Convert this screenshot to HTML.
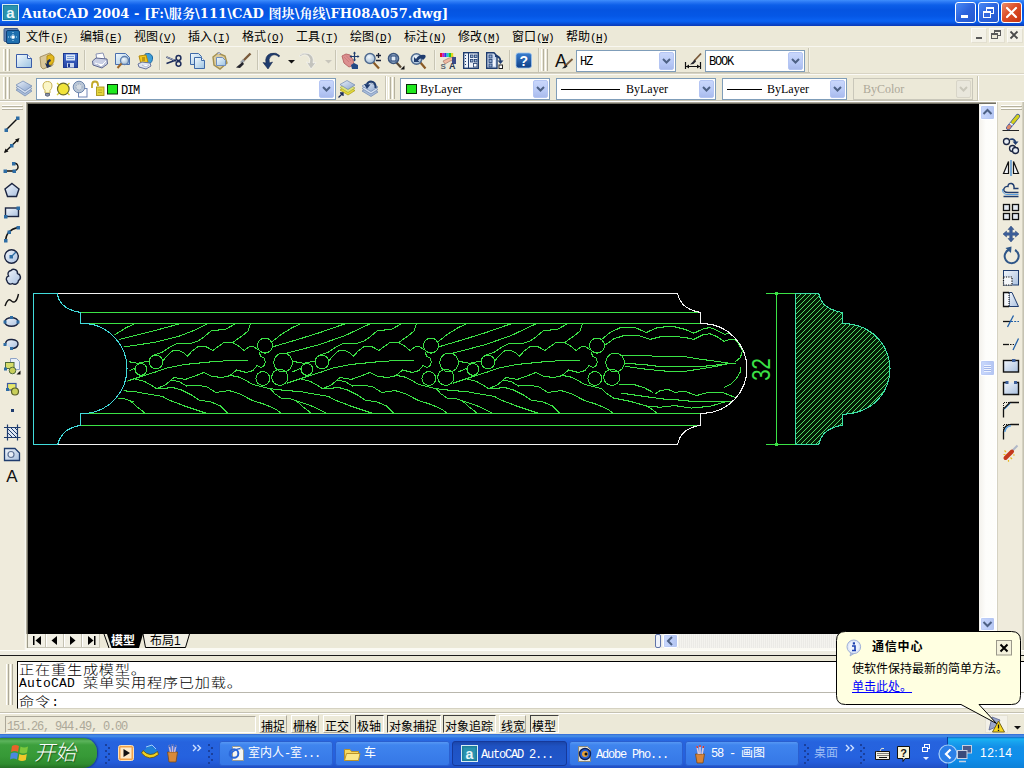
<!DOCTYPE html>
<html lang="zh-CN">
<head>
<meta charset="utf-8">
<title>AutoCAD 2004</title>
<style>
*{box-sizing:border-box}
html,body{margin:0;padding:0}
body{width:1024px;height:768px;position:relative;overflow:hidden;background:#ece9d8;
 font-family:"Liberation Serif","Noto Serif CJK SC",serif;font-size:12px;color:#000;line-height:1}
.abs{position:absolute}
.mono{font-family:"Liberation Mono","Noto Serif CJK SC",monospace}
#title{left:0;top:0;width:1024px;height:26px;
 background:linear-gradient(to bottom,#3f8efd 0,#2a78f4 2px,#0d5fe9 5px,#0554e1 10px,#0557e6 16px,#0b63f3 21px,#0855df 23px,#0a41c2 25px,#0a3bb8 26px)}
#title .txt{left:22px;top:3px;color:#fff;font:bold 13px "DejaVu Serif","Liberation Serif","Noto Serif CJK SC",serif;white-space:pre;letter-spacing:0.07px}
.wbtn{top:4px;width:19px;height:19px;border:1px solid #fff;border-radius:3px;
 background:linear-gradient(135deg,#4a8af5 0,#2c63dd 50%,#2458cf 100%)}
#menu{left:0;top:26px;width:1024px;height:20px;background:#ece9d8}
#menu span{position:absolute;top:5px;white-space:pre;font-size:12px;font-family:"Liberation Sans","Noto Sans CJK SC",sans-serif}
.tbline{left:0;width:1024px;height:1px}
.combo{background:#fff;border:1px solid #7f9db9;height:22px}
.combo .dd{position:absolute;right:1px;top:1px;width:15px;height:18px;overflow:hidden;border-radius:2px;
 background:linear-gradient(to bottom,#c9d7fb 0,#b8c9f6 60%,#a9bbed 100%);border:1px solid #b4c5f3}
.combo .t{position:absolute;top:5px;font:12px "Liberation Mono","Noto Serif CJK SC",monospace;letter-spacing:-1.2px;white-space:pre}
.combo .t.ser{top:3px;font-family:"Liberation Serif","Noto Serif CJK SC",serif;letter-spacing:0}
.grip{width:3px;border-left:1px solid #fff;border-right:1px solid #aca899;background:#ece9d8}
.sep{width:2px;border-left:1px solid #c5c2b2;border-right:1px solid #fff}
</style>
</head>
<body>
<div id="title" class="abs">
 <svg class="abs" style="left:2px;top:4px" width="17" height="17" viewBox="0 0 17 17">
  <rect x="0.5" y="0.5" width="16" height="16" fill="#1d7f9c" stroke="#d8eef2"/>
  <rect x="2" y="2" width="13" height="13" fill="#2a93ae"/>
  <text x="8.5" y="13.5" text-anchor="middle" font-family="Liberation Sans,sans-serif" font-weight="bold" font-size="15" fill="#e9f6f8">a</text>
 </svg>
 <div class="abs txt" id="ttxt">AutoCAD 2004 - [F:\服务\111\CAD 图块\角线\FH08A057.dwg]</div>
 <div class="abs wbtn" style="left:955px;top:2px;width:21px;height:21px"><div class="abs" style="left:5px;top:12px;width:7px;height:3px;background:#fff"></div></div>
 <div class="abs wbtn" style="left:978px;top:2px;width:21px;height:21px">
  <div class="abs" style="left:7px;top:4px;width:8px;height:7px;border:1px solid #fff;border-top-width:2px"></div>
  <div class="abs" style="left:4px;top:8px;width:8px;height:7px;border:1px solid #fff;border-top-width:2px;background:#3469df"></div>
 </div>
 <div class="abs wbtn" style="left:1001px;top:2px;width:21px;height:21px;background:linear-gradient(135deg,#ec8d6c 0,#dc4e28 45%,#c63310 100%)">
  <svg class="abs" style="left:0;top:0" width="19" height="19"><path d="M5 5 L14 14 M14 5 L5 14" stroke="#fff" stroke-width="2.2" stroke-linecap="round"/></svg>
 </div>
</div>
<div id="menu" class="abs">
 <svg class="abs" style="left:3px;top:2px" width="18" height="17" viewBox="0 0 18 17">
  <rect x="1" y="0.5" width="14" height="13" rx="1" fill="#5c7fb5" stroke="#3a5a8c"/>
  <rect x="3.5" y="2.5" width="13" height="13" rx="1.5" fill="#1f6fae" stroke="#0f3f74"/>
  <path d="M10 4 V14 M5 9 H15" stroke="#bfe6ff" stroke-width="1" stroke-dasharray="1 1"/>
  <rect x="8.5" y="7.5" width="3" height="3" fill="#fff"/>
 </svg>
 <span style="left:26px">文件<span class="mn">(<u>F</u>)</span></span>
 <span style="left:80px">编辑<span class="mn">(<u>E</u>)</span></span>
 <span style="left:134px">视图<span class="mn">(<u>V</u>)</span></span>
 <span style="left:188px">插入<span class="mn">(<u>I</u>)</span></span>
 <span style="left:242px">格式<span class="mn">(<u>O</u>)</span></span>
 <span style="left:296px">工具<span class="mn">(<u>T</u>)</span></span>
 <span style="left:350px">绘图<span class="mn">(<u>D</u>)</span></span>
 <span style="left:404px">标注<span class="mn">(<u>N</u>)</span></span>
 <span style="left:458px">修改<span class="mn">(<u>M</u>)</span></span>
 <span style="left:512px">窗口<span class="mn">(<u>W</u>)</span></span>
 <span style="left:566px">帮助<span class="mn">(<u>H</u>)</span></span>
 <div class="abs mdib" style="left:971px"></div><div class="abs mdib" style="left:989px"></div><div class="abs mdib" style="left:1007px"></div>
 <div class="abs" style="left:976px;width:6px;height:2px;background:#5a5a5a;top:11px"></div>
 <div class="abs" style="left:994px;top:4px;width:7px;height:6px;border:1px solid #5a5a5a;border-top-width:2px"></div>
 <div class="abs" style="left:991px;top:7px;width:7px;height:6px;border:1px solid #5a5a5a;border-top-width:2px;background:#ece9d8"></div>
 <svg class="abs" style="left:1009px;top:4px" width="10" height="10"><path d="M1.5 1.5 L8.5 8.5 M8.5 1.5 L1.5 8.5" stroke="#4a4a4a" stroke-width="1.8"/></svg>
</div>
<style>
#menu .mn{position:static;font-family:"Liberation Mono",monospace;font-size:11px;letter-spacing:-0.6px}
#menu span span{position:static}
.mdib{top:2px;width:16px;height:15px;background:#f3f1e7;border:1px solid #fbfaf5;border-right-color:#e2dfd0;border-bottom-color:#e2dfd0}
</style>
<!-- toolbar row 1 -->
<div class="abs" style="left:0;top:46px;width:1024px;height:1px;background:#f8f7f0"></div>
<div class="abs" style="left:0;top:72px;width:810px;height:1px;background:#c5c2b2"></div>
<div class="abs" style="left:0;top:73px;width:1024px;height:1px;background:#d8d4c4"></div>
<div class="abs" style="left:0;top:74px;width:1024px;height:1px;background:#fbfaf5"></div>
<svg class="abs" style="left:0;top:46px" width="1024" height="28" viewBox="0 46 1024 28">
 <defs>
  <linearGradient id="pg" x1="0" y1="0" x2="1" y2="1"><stop offset="0" stop-color="#f4fafd"/><stop offset="1" stop-color="#9cc3e2"/></linearGradient>
  <linearGradient id="fl" x1="0" y1="0" x2="0" y2="1"><stop offset="0" stop-color="#4a73d1"/><stop offset="1" stop-color="#2443a3"/></linearGradient>
  <radialGradient id="lens" cx="0.4" cy="0.35" r="0.7"><stop offset="0" stop-color="#f2f8fc"/><stop offset="1" stop-color="#9db8d2"/></radialGradient>
  <linearGradient id="hp" x1="0" y1="0" x2="0" y2="1"><stop offset="0" stop-color="#3a7fd0"/><stop offset="1" stop-color="#0f3f86"/></linearGradient>
 </defs>
 <!-- grippers -->
 <g fill="none">
  <path d="M3.5 49 V71 M7.5 49 V71" stroke="#fff"/><path d="M5.5 49 V71 M9.5 49 V71" stroke="#b5b19f"/>
  <path d="M541.5 49 V71 M545.5 49 V71" stroke="#fff"/><path d="M543.5 49 V71 M547.5 49 V71" stroke="#b5b19f"/>
 </g>
 <!-- separators -->
 <g stroke="#c8c5b4"><path d="M84.5 50 V70 M159.5 50 V70 M257.5 50 V70 M335.5 50 V70 M434.5 50 V70 M509.5 50 V70 M538.5 48 V72 M808.5 48 V72"/></g>
 <g stroke="#f4f2e8"><path d="M85.5 50 V70 M160.5 50 V70 M258.5 50 V70 M336.5 50 V70 M435.5 50 V70 M510.5 50 V70 M539.5 48 V72 M809.5 48 V72"/></g>
 <!-- New -->
 <g transform="translate(16,53)"><path d="M0.5 1.5 H11.5 L15.5 5.5 V14.5 H0.5 Z" fill="url(#pg)" stroke="#3a5ca8"/><path d="M11.5 1.5 V5.5 H15.5" fill="#fff" stroke="#3a5ca8"/></g>
 <!-- Open -->
 <g transform="translate(39,52)"><path d="M1 5 L11 1 L13 3 L14 13 L4 17 L2 15 Z" fill="#d9c79a" stroke="#a89466"/><path d="M8 4 Q13 1 15 5 Q16 10 12 13 L8 12 Z" fill="#e3b81e" stroke="#b28e12"/><path d="M11 7 Q7 8 8 12 L6 11 L8 16 L13 14 L10 13 Q9 10 12 9 Z" fill="#1f2f55"/></g>
 <!-- Save -->
 <g transform="translate(63,53)"><rect x="0.5" y="0.5" width="14" height="14" fill="url(#fl)" stroke="#1c3891"/><rect x="3" y="1.5" width="9" height="6" fill="#dbe7f7"/><path d="M4 3.5 H11 M4 5.5 H11" stroke="#7f9fd6"/><rect x="4" y="10" width="7" height="4.5" fill="#c9d6ee"/><rect x="5" y="10.5" width="2" height="3.5" fill="#1c3891"/></g>
 <!-- Print -->
 <g transform="translate(92,53)"><path d="M4 1 L11 0 L13 6 L5 8 Z" fill="#fdfdfd" stroke="#8a93b5"/><path d="M0.5 8 L4 5 L15 6 L15.5 11 L10 15 L1 12 Z" fill="#c9cfe4" stroke="#5d678f"/><path d="M3 10 L10 12 L14 8" fill="none" stroke="#fff"/><path d="M5 11 L9 14 L13 11" fill="#fff" stroke="#8a93b5" stroke-width="0.6"/></g>
 <!-- Preview -->
 <g transform="translate(114,52)"><path d="M1.5 1.5 H11.5 L15.5 5.5 V12.5 H1.5 Z" fill="url(#pg)" stroke="#4a6fae"/><circle cx="10.5" cy="8.5" r="4" fill="url(#lens)" stroke="#5f7fae" stroke-width="1.3"/><path d="M7.5 11.5 L3.5 16" stroke="#a0692a" stroke-width="2"/></g>
 <!-- Publish -->
 <g transform="translate(137,52)"><path d="M8 2 Q14 0 15.5 5 Q16 10 12 12 L8 8 Z" fill="#3f9fd8" stroke="#1d6aa5"/><path d="M2 4 L9 3 L11 10 L4 12 Z" fill="#f4c81f" stroke="#b48b0c"/><path d="M5 6 H8 M5 8 H8" stroke="#8a6a08"/><path d="M1 12 L5 10 L13 11 L14 14 L9 17 L2 15 Z" fill="#dfe5f2" stroke="#69749b"/><path d="M5 13 L9 15 L12 13" fill="#fff" stroke="#8a93b5" stroke-width="0.6"/></g>
 <!-- Cut -->
 <g transform="translate(166,54)" fill="none" stroke="#1d2d5b"><path d="M0.5 3 L10 7 M0.5 9.5 L10 6" stroke-width="1.6"/><path d="M1 3.2 L8 6" stroke="#c9d1e4" stroke-width="0.8"/><circle cx="12.5" cy="4" r="2.4" stroke-width="1.5"/><circle cx="12.5" cy="9.8" r="2.4" stroke-width="1.5"/></g>
 <!-- Copy -->
 <g transform="translate(189,52)"><path d="M1.5 1.5 H9.5 L12.5 4.5 V12.5 H1.5 Z" fill="url(#pg)" stroke="#3f6aa8"/><path d="M5.5 5.5 H12.5 L15.5 8.5 V16.5 H5.5 Z" fill="url(#pg)" stroke="#3f6aa8"/><path d="M12.5 5.5 V8.5 H15.5" fill="#fff" stroke="#3f6aa8"/></g>
 <!-- Paste -->
 <g transform="translate(212,51)"><path d="M1 6 L6 2 L13 5 L15 12 L8 18 L2 14 Z" fill="#dccc9d" stroke="#a4904f" stroke-width="1.4"/><path d="M5 3 Q7 0 9 3" fill="#e6e9f2" stroke="#7b86a8"/><path d="M4.500 6.500 H10.500 L13.500 9.500 V14.500 H4.500 Z" fill="url(#pg)" stroke="#6f8fbf"/></g>
 <!-- Match prop -->
 <g transform="translate(236,52)"><path d="M14.500 1.500 L7 9" stroke="#7a5a3a" stroke-width="2.400"/><path d="M8 8 L5 11" stroke="#9aa0a8" stroke-width="2.600"/><path d="M6.500 10 L0 15.500 L4 16 L8 12 Z" fill="#23242c"/></g>
 <!-- Undo -->
 <g transform="translate(263,52)"><path d="M16 5 Q12 1 8 4 Q5 7 6.500 11 L9.500 10 L5 17 L0 10.500 L3 11 Q1.500 4 7.500 1.500 Q13 0 16.500 3.500 Z" fill="#1f3c6e" stroke="#16294f" stroke-width="0.600"/></g>
 <path d="M288 60 H295 L291.500 63.500 Z" fill="#111"/>
 <!-- Redo (disabled) -->
 <g transform="translate(299,52)"><path d="M1 5 Q5 1 9 4 Q12 7 10.500 11 L7.500 10 L12 17 L17 10.500 L14 11 Q15.500 4 9.500 1.500 Q4 0 0.500 3.500 Z" fill="#c3c3bd" stroke="#fff" stroke-width="0.500"/></g>
 <path d="M325 60 H332 L328.500 63.500 Z" fill="#c8c6bc"/>
 <!-- Pan -->
 <g transform="translate(341,52)"><path d="M1 4 L5 2 L9 3 L12 8 L13 13 L8 15 L3 11 Z" fill="#dc8f8f" stroke="#b96a6a"/><path d="M3 5 L8 10 M5 3.500 L10 9" stroke="#c57676" stroke-width="0.700"/><path d="M10 13 L13 11 L17 13 L17 17 L11 17 Z" fill="#224a85"/><path d="M13.500 0.500 V8.500 M9.500 4.500 H17.500" stroke="#1f3c6e" stroke-width="1.200"/><path d="M13.500 -0.500 L15 1.500 H12 Z M13.500 9.500 L15 7.500 H12 Z M8.500 4.500 L10.500 3 V6 Z M18.500 4.500 L16.500 3 V6 Z" fill="#1f3c6e"/></g>
 <!-- Zoom realtime -->
 <g transform="translate(364,52)"><path d="M9 10 L15 16.500" stroke="#8a5a25" stroke-width="2.200"/><circle cx="6" cy="6.500" r="5" fill="url(#lens)" stroke="#4f6a8f" stroke-width="1.500"/><path d="M12 3.500 H17 M14.500 1 V6 M12 8.500 H17" stroke="#1a2238" stroke-width="1.300"/></g>
 <!-- Zoom window -->
 <g transform="translate(387,52)"><path d="M9 10 L14 15.500" stroke="#5a4a35" stroke-width="2.200"/><circle cx="6.500" cy="6.500" r="5" fill="#9db4cf" stroke="#3b557c" stroke-width="1.600"/><rect x="4" y="4" width="5" height="5" fill="#dfeaf5" stroke="#1f3c6e"/><path d="M17.500 13.500 V17.500 H13.500 Z" fill="#111"/></g>
 <!-- Zoom previous -->
 <g transform="translate(410,52)"><path d="M10 10 L15.500 16.500" stroke="#8a5a25" stroke-width="2.200"/><circle cx="6.500" cy="7" r="5.200" fill="url(#lens)" stroke="#4f6a8f" stroke-width="1.500"/><path d="M4 10 V5 L6 7 Q9 2 15 3 Q17 5 13 8 Q11 5 8 8.500 L9.500 10 Z" fill="#1f3c6e"/></g>
 <!-- Properties -->
 <g transform="translate(440,52)"><rect x="0" y="1" width="2.200" height="4" fill="#e0142a"/><rect x="2.200" y="1" width="2.200" height="4" fill="#c418c9"/><rect x="4.400" y="1" width="2.200" height="4" fill="#2438e4"/><rect x="6.600" y="1" width="2.200" height="4" fill="#19c7d6"/><rect x="8.800" y="1" width="2.200" height="4" fill="#1fc42a"/><rect x="11" y="1" width="2.200" height="4" fill="#e2d41c"/><path d="M3 9 L9 6 L14 5 L15 8 L10 9 L5 12 Z" fill="#f0b9a2" stroke="#9a6a5a" stroke-width="0.600"/><path d="M12 5 H16 V12 H12 Z" fill="#3a4a8a"/><text x="0.500" y="16.500" font-family="Liberation Sans,sans-serif" font-size="8" font-weight="bold" fill="#5a6670">S</text><text x="9" y="17" font-family="Liberation Sans,sans-serif" font-size="9" font-weight="bold" fill="#2a3550">A</text></g>
 <!-- DesignCenter -->
 <g transform="translate(463,52)"><rect x="0.700" y="0.700" width="14.600" height="15.600" fill="#eef3fa" stroke="#1f3c6e" stroke-width="1.400"/><path d="M5.500 1 V16" stroke="#1f3c6e"/><path d="M2 3.500 H4 M2 6.500 H4 M2 9.500 H4 M2 12.500 H4" stroke="#1f3c6e" stroke-dasharray="1 1"/><g fill="#9fb6d6" stroke="#1f3c6e" stroke-width="0.800"><rect x="7.500" y="3" width="2.500" height="2.500"/><rect x="11.500" y="3" width="2.500" height="2.500"/><rect x="7.500" y="7.500" width="2.500" height="2.500"/><rect x="11.500" y="7.500" width="2.500" height="2.500"/><rect x="10.500" y="11.500" width="3.500" height="3.500" fill="#fff"/></g></g>
 <!-- Tool palettes -->
 <g transform="translate(486,52)"><path d="M0.700 0.700 H8 L11 4 V16.300 H0.700 Z" fill="#cfdcf0" stroke="#1f3c6e" stroke-width="1.400"/><g fill="#8fa9d0" stroke="#1f3c6e" stroke-width="0.800"><rect x="3" y="3" width="3" height="3"/><rect x="3" y="7.500" width="3" height="3"/><rect x="3" y="12" width="3" height="3"/></g><path d="M8 8 V14" stroke="#fff" stroke-width="1.500"/><path d="M9 4 Q14 4 14.500 9" fill="none" stroke="#1f3c6e" stroke-width="1.800"/><path d="M11.500 8.500 H17.500 L14.500 12 Z" fill="#1f3c6e"/><rect x="13" y="13" width="3.500" height="3.500" fill="#fff" stroke="#222"/></g>
 <!-- Help -->
 <g transform="translate(516,53)"><rect x="0" y="0" width="15.500" height="15" rx="2.500" fill="url(#hp)" stroke="#9cc3ee" stroke-width="0.800"/><text x="7.800" y="12.800" text-anchor="middle" font-family="Liberation Sans,sans-serif" font-size="14" font-weight="bold" fill="#fff">?</text></g>
 <!-- Text style icon -->
 <g transform="translate(555,52)"><text x="0" y="15" font-family="Liberation Sans,sans-serif" font-size="18" fill="#111">A</text><path d="M17.500 7 L10 14" stroke="#7a5a3a" stroke-width="1.800"/><path d="M11 12.500 L7 16.500 L10.500 16 L12.500 14 Z" fill="#23242c"/></g>
 <!-- Dim style icon -->
 <g transform="translate(685,52)"><path d="M16 1.500 L9 9" stroke="#7a5a3a" stroke-width="1.800"/><path d="M10 7.500 L5 12.500 L8.500 12 L11 9.500 Z" fill="#23242c"/><path d="M0.500 10 V17 M15.500 10 V17 M1 14.500 H15" stroke="#111" stroke-width="1.200"/><path d="M1 14.500 L4 12.500 V16.500 Z M15 14.500 L12 12.500 V16.500 Z" fill="#111"/></g>
</svg>
<div class="abs combo" style="left:576px;top:50px;width:100px"><span class="t" style="left:3px;top:4px">HZ</span><div class="dd"><svg width="13" height="16"><path d="M3 6 L6.500 9.500 L10 6" fill="none" stroke="#4d6185" stroke-width="2"/></svg></div></div>
<div class="abs combo" style="left:705px;top:50px;width:100px"><span class="t" style="left:3px;top:4px">BOOK</span><div class="dd"><svg width="13" height="16"><path d="M3 6 L6.500 9.500 L10 6" fill="none" stroke="#4d6185" stroke-width="2"/></svg></div></div>
<!-- toolbar row 2 -->
<div class="abs" style="left:0;top:100px;width:978px;height:1px;background:#c5c2b2"></div>
<div class="abs" style="left:0;top:101px;width:1024px;height:1px;background:#fff"></div>
<svg class="abs" style="left:0;top:74px" width="1024" height="28" viewBox="0 74 1024 28">
 <defs>
  <linearGradient id="ly" x1="0" y1="0" x2="1" y2="1"><stop offset="0" stop-color="#eaf1f9"/><stop offset="1" stop-color="#8aa4cc"/></linearGradient>
 </defs>
 <g fill="none">
  <path d="M3.500 77 V99 M7.500 77 V99" stroke="#fff"/><path d="M5.500 77 V99 M9.500 77 V99" stroke="#b5b19f"/>
  <path d="M388.500 77 V99 M392.500 77 V99" stroke="#fff"/><path d="M390.500 77 V99 M394.500 77 V99" stroke="#b5b19f"/>
 </g>
 <g stroke="#c8c5b4"><path d="M385.500 76 V100 M977.500 76 V100"/></g>
 <g stroke="#fff"><path d="M386.500 76 V100 M978.500 76 V100"/></g>
 <!-- Layers icon -->
 <g transform="translate(16,81)"><path d="M0 9 L7 5 L16 10 L9 15 Z" fill="#a9bddb" stroke="#7088b0" stroke-width="0.700"/><path d="M0 6.500 L7 2.500 L16 7.500 L9 12.500 Z" fill="#d6e1f1" stroke="#7088b0" stroke-width="0.700"/><path d="M0 4 L7 0 L16 5 L9 10 Z" fill="url(#ly)" stroke="#6d86b0" stroke-width="0.700"/></g>
 <!-- make object's layer current -->
 <g transform="translate(338,80)"><path d="M2 10 L9 6 L17 10.500 L10 15 Z" fill="#e6d93a" stroke="#a89c14" stroke-width="0.700"/><path d="M2 7.500 L9 3.500 L17 8 L10 12.500 Z" fill="#dfe57a" stroke="#a8a840" stroke-width="0.700"/><path d="M2 4.500 L9 0.500 L17 5 L10 9.500 Z" fill="url(#ly)" stroke="#6d86b0" stroke-width="0.700"/><path d="M0.500 17.500 L4.500 13.500 M2 13 H5 V16" stroke="#1a2a5a" stroke-width="1.300" fill="none"/></g>
 <!-- layer previous -->
 <g transform="translate(362,80)"><path d="M0 11 L7 7 L16 12 L9 16.500 Z" fill="#a9bddb" stroke="#7088b0" stroke-width="0.700"/><path d="M0 8.500 L7 4.500 L16 9.500 L9 14 Z" fill="#d6e1f1" stroke="#7088b0" stroke-width="0.700"/><path d="M0 6 L7 2 L16 7 L9 11.500 Z" fill="url(#ly)" stroke="#6d86b0" stroke-width="0.700"/><path d="M13.500 8 Q14 2 9 1.500 Q6 1.500 5 4.500" fill="none" stroke="#1f3c6e" stroke-width="2"/><path d="M2 4 L8.500 4.500 L5 9 Z" fill="#1f3c6e"/></g>
</svg>
<!-- Layer combo -->
<div class="abs combo" style="left:36px;top:78px;width:300px">
 <svg class="abs" style="left:0;top:0" width="90" height="20" viewBox="37 79 90 20">
  <!-- bulb -->
  <path d="M47.500 81.500 Q52 81.500 52 86 Q52 88.500 50 90.500 V93 H45 V90.500 Q43 88.500 43 86 Q43 81.500 47.500 81.500 Z" fill="#fbf6c8" stroke="#c9b356" stroke-width="1"/><path d="M45.500 93.500 H49.500 V95.500 Q47.500 97 45.500 95.500 Z" fill="#8d95a8" stroke="#4d566e" stroke-width="0.800"/>
  <!-- sun -->
  <path d="M57 83 L69.500 95 M69.500 83 L57 95" stroke="#d8d23a" stroke-width="1.400"/><circle cx="63.300" cy="89" r="5.800" fill="#f1e43a" stroke="#6a6a2a" stroke-width="1.200"/>
  <!-- viewport freeze -->
  <rect x="78.500" y="88.500" width="8.500" height="8.500" fill="#fff" stroke="#7086b5"/><circle cx="79" cy="87" r="5.800" fill="#b9c6d6" stroke="#6f87ad" stroke-width="1"/><circle cx="79" cy="87" r="3" fill="#d4dbe2" stroke="#8ea0bb" stroke-width="0.800" stroke-dasharray="1.500 1"/>
  <!-- lock -->
  <path d="M92 88 V85 Q92 81.500 95 81.500 Q98 81.500 98 85 V86" fill="none" stroke="#c2a928" stroke-width="1.800"/><rect x="96.500" y="87" width="7.500" height="8.500" fill="#e3d43c" stroke="#a8961c" stroke-width="0.900"/><path d="M98 90 H102 M98 92.500 H102" stroke="#b4a224" stroke-width="0.800"/>
  <!-- color -->
  <rect x="107.500" y="84.500" width="10" height="9.500" fill="#1fe81f" stroke="#0a2a0a" stroke-width="1"/>
 </svg>
 <span class="t" style="left:84px">DIM</span>
 <div class="dd"><svg width="13" height="16"><path d="M3 6 L6.500 9.500 L10 6" fill="none" stroke="#4d6185" stroke-width="2"/></svg></div>
</div>
<!-- Color combo -->
<div class="abs combo" style="left:400px;top:78px;width:150px">
 <div class="abs" style="left:5px;top:5px;width:11px;height:10px;background:#1fe81f;border:1px solid #0a2a0a"></div>
 <span class="t ser" style="left:19px">ByLayer</span>
 <div class="dd"><svg width="13" height="16"><path d="M3 6 L6.500 9.500 L10 6" fill="none" stroke="#4d6185" stroke-width="2"/></svg></div>
</div>
<!-- Linetype combo -->
<div class="abs combo" style="left:556px;top:78px;width:160px">
 <div class="abs" style="left:4px;top:10px;width:59px;height:1px;background:#000"></div>
 <span class="t ser" style="left:69px">ByLayer</span>
 <div class="dd"><svg width="13" height="16"><path d="M3 6 L6.500 9.500 L10 6" fill="none" stroke="#4d6185" stroke-width="2"/></svg></div>
</div>
<!-- Lineweight combo -->
<div class="abs combo" style="left:722px;top:78px;width:125px">
 <div class="abs" style="left:4px;top:10px;width:35px;height:1px;background:#000"></div>
 <span class="t ser" style="left:44px">ByLayer</span>
 <div class="dd"><svg width="13" height="16"><path d="M3 6 L6.500 9.500 L10 6" fill="none" stroke="#4d6185" stroke-width="2"/></svg></div>
</div>
<!-- Plot style combo (disabled) -->
<div class="abs combo" style="left:853px;top:78px;width:120px;background:#ece9d8;border-color:#c9c7ba">
 <span class="t ser" style="left:9px;color:#aca899">ByColor</span>
 <div class="dd" style="background:#e9e7dc;border-color:#d8d5c8"><svg width="13" height="16"><path d="M3 6 L6.500 9.500 L10 6" fill="none" stroke="#c9c7ba" stroke-width="2"/></svg></div>
</div>
<!-- left (draw) toolbar -->
<svg class="abs" style="left:0;top:102px" width="28" height="552" viewBox="0 102 28 552">
 <defs>
  <linearGradient id="lb" x1="0" y1="0" x2="1" y2="1"><stop offset="0" stop-color="#f2f6fb"/><stop offset="1" stop-color="#a9c0df"/></linearGradient>
 </defs>
 <rect x="0" y="102" width="24" height="552" fill="#efebdc"/>
 <path d="M24.500 102 V650" stroke="#f1eee2"/><path d="M25.500 102 V650" stroke="#f8f7f0"/>
 <path d="M26.500 102 V634" stroke="#aca899"/><path d="M27.500 103 V634" stroke="#716f64"/>
 <path d="M2 105.500 H22 M2 108.500 H22" stroke="#fff"/><path d="M2 106.500 H23 M2 109.500 H23" stroke="#b5b19f"/>
 <g fill="#2e6da4" stroke="#9cc4e4" stroke-width="0.500" id="hnd"></g>
 <!-- line -->
 <path d="M6 130 L18 118" stroke="#111" stroke-width="1.400"/><rect x="4.500" y="128.500" width="3.500" height="3.500" fill="#2e6da4"/><rect x="16" y="116.500" width="3.500" height="3.500" fill="#2e6da4"/>
 <!-- xline -->
 <path d="M5 152 L18 139.500" stroke="#111" stroke-width="1.400"/><path d="M4 153 L5.500 148.500 L8.500 151.500 Z M19.500 138 L18 142.500 L15 139.500 Z" fill="#111"/><rect x="10" y="144" width="3.500" height="3.500" fill="#2e6da4"/>
 <!-- pline -->
 <path d="M5 171 H14.500 Q19.500 169 17.500 165 Q16 162.500 13.500 164" fill="none" stroke="#111" stroke-width="1.400"/><rect x="3.500" y="169.500" width="3.500" height="3.500" fill="#2e6da4"/><rect x="12.500" y="169.500" width="3.500" height="3.500" fill="#2e6da4"/><rect x="12" y="162" width="3.500" height="3.500" fill="#2e6da4"/>
 <!-- polygon -->
 <path d="M12 183.500 L19 189 L16.500 196.500 H7.500 L5 189 Z" fill="url(#lb)" stroke="#1a2440" stroke-width="1.400"/>
 <!-- rectangle -->
 <rect x="5.500" y="208" width="13" height="8.500" fill="url(#lb)" stroke="#1a2440" stroke-width="1.400"/><rect x="4" y="215" width="3.500" height="3.500" fill="#2e6da4"/><rect x="16.500" y="206.500" width="3.500" height="3.500" fill="#2e6da4"/>
 <!-- arc -->
 <path d="M5.500 241 Q6 230 18 227.500" fill="none" stroke="#111" stroke-width="1.400"/><rect x="4" y="239" width="3.500" height="3.500" fill="#2e6da4"/><rect x="7.500" y="230.500" width="3.500" height="3.500" fill="#2e6da4"/><rect x="16.500" y="226" width="3.500" height="3.500" fill="#2e6da4"/>
 <!-- circle -->
 <circle cx="11.500" cy="256.500" r="6.800" fill="url(#lb)" stroke="#1a2440" stroke-width="1.400"/><path d="M11 257 L16 252" stroke="#2e6da4" stroke-width="1.300"/><rect x="9.500" y="255" width="3.500" height="3.500" fill="#2e6da4"/>
 <!-- revcloud -->
 <path d="M8.5 276 A3.6 3.6 0 0 1 11 270.500 A3.800 3.800 0 0 1 17.500 273.500 A3.800 3.800 0 0 1 18.500 280.500 A3.800 3.800 0 0 1 12.500 283.500 A3.600 3.600 0 0 1 7 281 A3.200 3.200 0 0 1 8.500 276 Z" fill="url(#lb)" stroke="#1a2440" stroke-width="1.400"/>
 <!-- spline -->
 <path d="M5 306 Q8 297 11.500 301 Q16 305 18.500 294" fill="none" stroke="#111" stroke-width="1.400"/>
 <!-- ellipse -->
 <ellipse cx="11.500" cy="322" rx="6.800" ry="4.300" fill="url(#lb)" stroke="#1a2440" stroke-width="1.400"/><rect x="3.500" y="320.500" width="3" height="3" fill="#2e6da4"/><rect x="16.500" y="320.500" width="3" height="3" fill="#2e6da4"/><rect x="10" y="316" width="3" height="3" fill="#2e6da4"/>
 <!-- ellipse arc -->
 <path d="M5.500 344.500 Q5.500 339 12 339.500 Q18.500 340 18 344.500 Q17 348.500 11.500 348.500" fill="url(#lb)" stroke="#1a2440" stroke-width="1.400"/><rect x="3.500" y="343" width="3" height="3" fill="#2e6da4"/><rect x="10" y="347" width="3" height="3" fill="#2e6da4"/>
 <!-- insert block -->
 <path d="M10.500 358.500 H16.500 L19.500 361.500 V369.500 H10.500 Z" fill="#e8eef7" stroke="#8ea3c6"/><rect x="5.500" y="362.500" width="8.500" height="6" fill="#d6dc6a" stroke="#4f6a3a"/><circle cx="12.500" cy="370.500" r="3.300" fill="#c9cf5a" stroke="#4f6a3a"/><rect x="4" y="367.500" width="3" height="3" fill="#2e6da4"/><path d="M20.500 370.500 V374.500 H16.500 Z" fill="#111"/>
 <!-- make block -->
 <rect x="7.500" y="383.500" width="8.500" height="6.500" fill="#e8e86a" stroke="#3f5aa0" stroke-width="1.200"/><circle cx="15" cy="391.500" r="3.500" fill="#c9cf5a" stroke="#5a5f2a" stroke-width="1.200"/><rect x="6" y="388" width="3" height="3" fill="#2e6da4"/>
 <!-- point -->
 <rect x="11" y="409" width="3" height="3" fill="#1f3c6e"/>
 <!-- hatch -->
 <g><rect x="7.500" y="427.500" width="10" height="10" fill="#dfe8f4" stroke="#1f3c6e"/><path d="M8 433 L12 437 M8 429 L16 437 M11 428 L17.500 434.500 M15 428 L17.500 430.500" stroke="#1f3c6e" stroke-width="1"/><path d="M4 427.500 H20.500 M4 437.500 H20.500 M7.500 424.500 V440.500 M17.500 424.500 V440.500" stroke="#1f3c6e" stroke-width="1.200"/></g>
 <!-- region -->
 <path d="M4.500 448.500 H15 L19.500 453 V460.500 H4.500 Z" fill="url(#lb)" stroke="#1f3c6e" stroke-width="1.300"/><circle cx="11" cy="454.500" r="3" fill="#e8eef7" stroke="#5f7396" stroke-width="1.200"/>
 <!-- text A -->
 <text x="12" y="482" text-anchor="middle" font-family="Liberation Sans,sans-serif" font-size="17" fill="#111">A</text>
</svg>
<!-- right (modify) toolbar -->
<svg class="abs" style="left:998px;top:102px" width="26" height="552" viewBox="998 102 26 552">
 <rect x="998" y="102" width="26" height="552" fill="#efebdc"/>
 <path d="M1022.500 102 V654" stroke="#d5d2c2"/><path d="M1023.500 102 V654" stroke="#c5c2b2"/>
 <path d="M1001 105.500 H1021 M1001 108.500 H1021" stroke="#fff"/><path d="M1001 106.500 H1022 M1001 109.500 H1022" stroke="#b5b19f"/>
 <!-- erase -->
 <path d="M1002.500 130.500 H1019" stroke="#222" stroke-width="1"/><path d="M1017.800 116.200 L1008.300 127.800" stroke="#2a4a9e" stroke-width="4.400" stroke-linecap="round"/><path d="M1017.800 116.200 L1012.800 122.300" stroke="#d4cf1c" stroke-width="3.200" stroke-linecap="round"/><path d="M1011.800 123.500 L1010.700 124.900" stroke="#f4f6fb" stroke-width="3.400"/><path d="M1009.600 126.200 L1008.300 127.800" stroke="#de8868" stroke-width="3.400" stroke-linecap="round"/>
 <!-- copy object -->
 <circle cx="1006.500" cy="141.500" r="3" fill="#e8eef5" stroke="#1a2440" stroke-width="1.300"/><circle cx="1012.500" cy="148.500" r="3" fill="#e8eef5" stroke="#1a2440" stroke-width="1.300"/><circle cx="1015.500" cy="150.500" r="3" fill="#e8eef5" stroke="#1a2440" stroke-width="1.300"/><path d="M1010 139.500 Q1014 138 1015.500 142" fill="none" stroke="#1f3c6e" stroke-width="1.800"/><path d="M1012.500 141.500 H1018.500 L1015.500 145 Z" fill="#1f3c6e"/>
 <!-- mirror -->
 <path d="M1003.500 173.500 L1008.500 161.500 V173.500 Z M1018.500 173.500 L1013.500 161.500 V173.500 Z" fill="#f3f6fa" stroke="#111" stroke-width="1.200"/><path d="M1011 160 V176" stroke="#2e7fd0" stroke-width="1.200"/>
 <!-- offset -->
 <path d="M1003.500 196.500 H1018.500 M1018.500 192.500 H1008 Q1003 192.500 1004 188.500 Q1005 186 1008 186.500 Q1008 183 1011.500 183.500 Q1014.500 184 1014 188.500 H1018.500" fill="none" stroke="#1f3c6e" stroke-width="1.400"/><path d="M1018.500 194.500 H1007 Q1002 194 1002.500 189" fill="none" stroke="#5a9fe0" stroke-width="1"/>
 <!-- array -->
 <g fill="#e3e9f1" stroke="#111" stroke-width="1.300"><rect x="1003.500" y="204.500" width="6" height="6"/><rect x="1012.500" y="204.500" width="6" height="6"/><rect x="1003.500" y="213.500" width="6" height="6"/><rect x="1012.500" y="213.500" width="6" height="6"/></g>
 <!-- move -->
 <path d="M1011 226 L1014 229.500 H1012.300 V232.700 H1015.500 V231 L1019 234 L1015.500 237 V235.300 H1012.300 V238.500 H1014 L1011 242 L1008 238.500 H1009.700 V235.300 H1006.500 V237 L1003 234 L1006.500 231 V232.700 H1009.700 V229.500 H1008 Z" fill="#3d5f9a" stroke="#2a4678" stroke-width="0.500"/>
 <!-- rotate -->
 <path d="M1009.500 249.500 A7 7 0 1 0 1015 250" fill="none" stroke="#2f5688" stroke-width="2"/><path d="M1005.500 248 L1011.500 246.500 L1011 253 Z" fill="#2f5688"/>
 <!-- scale -->
 <rect x="1003.500" y="270.500" width="15" height="14.500" fill="url(#lb)" stroke="#1f3c6e"/><rect x="1003.500" y="277" width="8.500" height="8" fill="#f6f8fb" stroke="#111" stroke-width="1.200" stroke-dasharray="1.200 1.200"/>
 <!-- stretch -->
 <path d="M1009 292.500 H1012 L1018.500 306.500 H1009 Z" fill="url(#lb)" stroke="#1f3c6e"/><path d="M1009 292.500 H1003.500 V306.500 H1009" fill="#f6f8fb" stroke="#111" stroke-width="1.300"/><path d="M1009 293 V306" stroke="#111" stroke-dasharray="1 1"/>
 <!-- trim -->
 <path d="M1003 321.500 H1010" stroke="#111" stroke-width="1.300"/><path d="M1011 321.500 H1019" stroke="#1f5fa8" stroke-width="1.200" stroke-dasharray="2 1.200"/><path d="M1013.500 315.500 L1007.500 327" stroke="#1f5fa8" stroke-width="1.300"/>
 <!-- extend -->
 <path d="M1003 344.500 H1009" stroke="#111" stroke-width="1.300"/><path d="M1010 344.500 H1014" stroke="#111" stroke-width="1.200" stroke-dasharray="1.500 1.200"/><path d="M1018.500 338.500 L1013 350" stroke="#1f5fa8" stroke-width="1.300"/>
 <!-- break at point -->
 <rect x="1003.500" y="360.500" width="15" height="11.500" fill="url(#lb)" stroke="#111" stroke-width="1.400"/><rect x="1012" y="359" width="3.500" height="3" fill="#3d5f9a"/>
 <!-- break -->
 <path d="M1007 382.500 H1003.500 V394.500 H1018.500 V382.500 H1016" fill="url(#lb)" stroke="#111" stroke-width="1.400"/><rect x="1005.500" y="381" width="3" height="3" fill="#3d5f9a"/><rect x="1014" y="381" width="3" height="3" fill="#3d5f9a"/>
 <!-- chamfer -->
 <path d="M1003.500 417.500 V409 L1010 402.500 H1019" fill="none" stroke="#111" stroke-width="1.300"/><path d="M1003.500 408 V402.500 H1009" fill="none" stroke="#111" stroke-dasharray="1 1"/><path d="M1004.500 409.500 L1010.500 403.500" stroke="#5a9fe0" stroke-width="1"/>
 <!-- fillet -->
 <path d="M1003.500 439.500 V432 Q1004 425 1011 424.500 H1019" fill="none" stroke="#111" stroke-width="1.300"/><path d="M1003.500 430 V424.500 H1009" fill="none" stroke="#111" stroke-dasharray="1 1"/><path d="M1004.800 432 Q1005.500 426.500 1011 425.800" fill="none" stroke="#5a9fe0" stroke-width="1.400"/>
 <!-- explode -->
 <path d="M1017.500 445.500 L1010 453" stroke="#b0b8c8" stroke-width="2"/><path d="M1012 451.500 L1005.500 458" stroke="#c4381c" stroke-width="4" stroke-linecap="round"/><path d="M1004.500 450.500 l1.500 1.500 M1003.500 454.500 h2 M1010.500 457.500 l1.500 1.500 M1008.500 460 v1.800 M1013 455 h1.800" stroke="#e8b820" stroke-width="1.200"/>
</svg>
<!-- drawing canvas -->
<div class="abs" style="left:26px;top:102px;width:972px;height:1px;background:#aca899"></div>
<div class="abs" style="left:27px;top:103px;width:970px;height:1px;background:#716f64"></div>
<div id="cv" class="abs" style="left:28px;top:104px;width:951px;height:530px;background:#000;overflow:hidden">
<!--CANVAS_START-->
<svg style="position:absolute;left:0;top:0" width="951" height="530" viewBox="28 104 951 530" shape-rendering="crispEdges">
<defs><clipPath id="cl"><path d="M87.3 323 A45.3 45.5 0 0 1 87.3 413.8 L640 413.8 L640 323 Z"/></clipPath>
<clipPath id="cr"><path d="M560 323 H704 A45 45.4 0 0 1 704 413.8 H560 Z"/></clipPath>
<clipPath id="cs"><path d="M795.4 293.4 H818.7 Q820.2 300 823.7 304 Q830.2 310.5 842.6 312.6 V323.5 Q866 324 879.5 340 Q890 353 890 368.9 Q890 385 879.5 398 Q866 413.5 842.6 414.3 V425.2 Q830.2 427 823.7 433.8 Q820.2 438 818.7 444.4 H795.4 Z"/></clipPath>
</defs>
<g clip-path="url(#cl)" fill="none" stroke="#3be246" stroke-width="1.05" stroke-linejoin="round">
<polyline points="-9.5,388.8 -0.7,385.0 8.0,377.5 19.3,379.4 28.0,376.3 38.0,372.5 45.5,376.3 55.5,377.5 64.3,375.6 71.5,376.5 79.0,380.0 86.5,384.4 94.0,386.3 101.5,388.1 109.0,389.4 121.5,390.6 136.5,391.9 146.5,393.8 162.0,396.3 169.0,400.0 185.3,406.3 206.5,413.3" />
<polyline points="104.0,388.6 109.0,393.8 115.3,398.1 124.0,398.8 134.0,401.9" />
<polyline points="130.3,400.8 137.8,407.5 145.3,413.3" />
<circle cx="-67.0" cy="345.6" r="7.5"/>
<circle cx="-48.9" cy="362.5" r="9.4"/>
<circle cx="-52.2" cy="377.3" r="8.1"/>
<circle cx="-69.2" cy="378.5" r="6.9"/>
<circle cx="-25.1" cy="369.4" r="5.9"/>
<circle cx="-10.1" cy="361.9" r="6.9"/>
<polyline points="105.9,341.9 115.3,334.4 126.5,327.5 134.6,323.8" />
<polyline points="106.5,343.5 118.6,339.6 156.0,330.2 179.6,323.8" />
<polyline points="110.0,350.0 123.0,347.1 156.0,342.1 179.6,336.0 195.0,330.0 207.5,323.8" />
<polyline points="126.5,361.3 137.8,363.3 149.0,361.0" />
<polyline points="126.3,371.9 135.3,368.1" />
<polyline points="120.5,383.3 134.0,378.8 141.5,376.3 154.0,372.5 166.5,368.1 185.3,364.4 210.3,361.9 229.0,360.6 247.8,360.3" />
<polyline points="154.0,355.2 162.8,351.9 170.3,346.9 176.5,343.8 189.0,343.8 197.8,341.3 204.0,336.9 211.5,330.6 225.3,329.4 235.3,323.8" />
<polyline points="162.6,361.3 164.6,358.5 167.8,355.0 172.8,350.6 179.0,350.6 184.0,353.1 187.8,356.3 191.5,351.3 197.8,346.9 206.5,346.9 212.8,350.6 217.8,346.9 224.0,342.5 232.8,342.5 239.0,346.3 244.0,350.6 249.0,346.9 254.0,346.9 258.0,349.6" />
<polyline points="232.8,342.5 241.5,336.3 247.8,331.3 250.3,323.8" />
<polyline points="259.6,351.9 260.3,356.3 264.0,358.1 265.3,361.9 264.0,365.6 260.9,367.5 257.1,365.6 252.8,370.6 246.5,372.5 241.5,371.3 236.5,370.0 230.3,375.3" />
<polyline points="156.5,388.8 165.3,385.0 174.0,377.5 185.3,379.4 194.0,376.3 204.0,372.5 211.5,376.3 221.5,377.5 230.3,375.6 237.5,376.5 245.0,380.0 252.5,384.4 260.0,386.3 267.5,388.1 275.0,389.4 287.5,390.6 302.5,391.9 312.5,393.8 328.0,396.3 335.0,400.0 351.3,406.3 372.5,413.3" />
<polyline points="171.5,380.3 179.0,381.5 186.5,386.0 198.0,385.2 207.0,386.9 215.8,392.5 229.0,390.6 239.0,393.5 252.0,400.3 265.0,404.5 274.5,408.5 281.6,413.3" />
<polyline points="156.5,388.8 172.8,387.6 181.0,389.7 191.6,395.0 199.0,400.0 210.8,401.9 220.2,405.8 227.7,413.3" />
<polyline points="134.0,378.8 144.0,381.2 151.6,385.4 156.5,388.8" />
<polyline points="270.0,388.6 275.0,393.8 281.3,398.1 290.0,398.8 300.0,401.9 312.5,406.3 325.0,412.5 326.5,413.3" />
<polyline points="296.3,400.8 303.8,407.5 311.3,413.3" />
<circle cx="99.0" cy="345.6" r="7.5"/>
<circle cx="117.1" cy="362.5" r="9.4"/>
<circle cx="113.8" cy="377.3" r="8.1"/>
<circle cx="96.8" cy="378.5" r="6.9"/>
<circle cx="140.9" cy="369.4" r="5.9"/>
<circle cx="155.9" cy="361.9" r="6.9"/>
<polyline points="271.9,341.9 281.3,334.4 292.5,327.5 300.6,323.8" />
<polyline points="272.5,346.9 300.0,338.8 320.0,332.5 345.0,323.8" />
<polyline points="286.3,353.3 306.3,348.1 320.0,344.4 345.0,335.6 370.0,323.8" />
<polyline points="292.5,361.3 303.8,363.3 315.0,361.0" />
<polyline points="292.3,371.9 301.3,368.1" />
<polyline points="286.5,383.3 300.0,378.8 307.5,376.3 320.0,372.5 332.5,368.1 351.3,364.4 376.3,361.9 395.0,360.6 413.8,360.3" />
<polyline points="320.0,355.2 328.8,351.9 336.3,346.9 342.5,343.8 355.0,343.8 363.8,341.3 370.0,336.9 377.5,330.6 391.3,329.4 401.3,323.8" />
<polyline points="328.6,361.3 330.6,358.5 333.8,355.0 338.8,350.6 345.0,350.6 350.0,353.1 353.8,356.3 357.5,351.3 363.8,346.9 372.5,346.9 378.8,350.6 383.8,346.9 390.0,342.5 398.8,342.5 405.0,346.3 410.0,350.6 415.0,346.9 420.0,346.9 424.0,349.6" />
<polyline points="398.8,342.5 407.5,336.3 413.8,331.3 416.3,323.8" />
<polyline points="425.6,351.9 426.3,356.3 430.0,358.1 431.3,361.9 430.0,365.6 426.9,367.5 423.1,365.6 418.8,370.6 412.5,372.5 407.5,371.3 402.5,370.0 396.3,375.3" />
<polyline points="322.5,388.8 331.3,385.0 340.0,377.5 351.3,379.4 360.0,376.3 370.0,372.5 377.5,376.3 387.5,377.5 396.3,375.6 403.5,376.5 411.0,380.0 418.5,384.4 426.0,386.3 433.5,388.1 441.0,389.4 453.5,390.6 468.5,391.9 478.5,393.8 494.0,396.3 501.0,400.0 517.3,406.3 538.5,413.3" />
<polyline points="337.5,380.3 345.0,381.5 352.5,386.0 364.0,385.2 373.0,386.9 381.8,392.5 395.0,390.6 405.0,393.5 418.0,400.3 431.0,404.5 440.5,408.5 447.6,413.3" />
<polyline points="322.5,388.8 338.8,387.6 347.0,389.7 357.6,395.0 365.0,400.0 376.8,401.9 386.2,405.8 393.7,413.3" />
<polyline points="300.0,378.8 310.0,381.2 317.6,385.4 322.5,388.8" />
<polyline points="436.0,388.6 441.0,393.8 447.3,398.1 456.0,398.8 466.0,401.9 478.5,406.3 491.0,412.5 492.5,413.3" />
<polyline points="462.3,400.8 469.8,407.5 477.3,413.3" />
<circle cx="265.0" cy="345.6" r="7.5"/>
<circle cx="283.1" cy="362.5" r="9.4"/>
<circle cx="279.8" cy="377.3" r="8.1"/>
<circle cx="262.8" cy="378.5" r="6.9"/>
<circle cx="306.9" cy="369.4" r="5.9"/>
<circle cx="321.9" cy="361.9" r="6.9"/>
<polyline points="437.9,341.9 447.3,334.4 458.5,327.5 466.6,323.8" />
<polyline points="438.5,346.9 466.0,338.8 486.0,332.5 511.0,323.8" />
<polyline points="452.3,353.3 472.3,348.1 486.0,344.4 511.0,335.6 536.0,323.8" />
<polyline points="458.5,361.3 469.8,363.3 481.0,361.0" />
<polyline points="458.3,371.9 467.3,368.1" />
<polyline points="452.5,383.3 466.0,378.8 473.5,376.3 486.0,372.5 498.5,368.1 517.3,364.4 542.3,361.9 561.0,360.6 579.8,360.3" />
<polyline points="486.0,355.2 494.8,351.9 502.3,346.9 508.5,343.8 521.0,343.8 529.8,341.3 536.0,336.9 543.5,330.6 557.3,329.4 567.3,323.8" />
<polyline points="494.6,361.3 496.6,358.5 499.8,355.0 504.8,350.6 511.0,350.6 516.0,353.1 519.8,356.3 523.5,351.3 529.8,346.9 538.5,346.9 544.8,350.6 549.8,346.9 556.0,342.5 564.8,342.5 571.0,346.3 576.0,350.6 581.0,346.9 586.0,346.9 590.0,349.6" />
<polyline points="564.8,342.5 573.5,336.3 579.8,331.3 582.3,323.8" />
<polyline points="591.6,351.9 592.3,356.3 596.0,358.1 597.3,361.9 596.0,365.6 592.9,367.5 589.1,365.6 584.8,370.6 578.5,372.5 573.5,371.3 568.5,370.0 562.3,375.3" />
<polyline points="503.5,380.3 511.0,381.5 518.5,386.0 530.0,385.2 539.0,386.9 547.8,392.5 561.0,390.6 571.0,393.5 584.0,400.3 597.0,404.5 606.5,408.5 613.6,413.3" />
<polyline points="488.5,388.8 504.8,387.6 513.0,389.7 523.6,395.0 531.0,400.0 542.8,401.9 552.2,405.8 559.7,413.3" />
<polyline points="466.0,378.8 476.0,381.2 483.6,385.4 488.5,388.8" />
<circle cx="431.0" cy="345.6" r="7.5"/>
<circle cx="449.1" cy="362.5" r="9.4"/>
<circle cx="445.8" cy="377.3" r="8.1"/>
<circle cx="428.8" cy="378.5" r="6.9"/>
<circle cx="472.9" cy="369.4" r="5.9"/>
<circle cx="487.9" cy="361.9" r="6.9"/>
<polyline points="488.5,388.8 497.3,385.0 506.0,377.5 517.3,379.4 526.0,376.3 536.0,372.5 543.5,376.3 553.5,377.5 562.3,375.6 569.5,376.5 577.0,380.0 584.5,384.4 592.0,386.3 599.5,388.1 602.0,388.6" />
</g>
<g clip-path="url(#cr)" fill="none" stroke="#3be246" stroke-width="1.05" stroke-linejoin="round">
<circle cx="597.0" cy="345.6" r="7.5"/>
<circle cx="615.1" cy="362.5" r="9.4"/>
<circle cx="611.8" cy="377.3" r="8.1"/>
<circle cx="594.8" cy="378.5" r="6.9"/>
<polyline points="602.5,338.8 610.0,332.5 620.0,327.8 635.0,327.5 646.3,332.5 657.5,327.5 672.5,326.3 685.0,329.4 693.8,333.1 703.8,328.8 710.0,327.5 716.3,330.0 725.0,334.4 730.0,332.5" />
<polyline points="604.4,345.6 613.8,338.8 623.8,335.6 638.8,335.6 650.0,339.4 662.5,336.3 672.5,336.3 685.0,337.5 693.8,339.4 703.8,334.4 710.0,333.8 716.3,336.3 723.8,341.3 730.0,339.4 735.0,339.4 738.6,343.8 742.3,350.6 740.5,357.5 735.0,361.9" />
<polyline points="622.3,355.6 650.0,355.6 655.0,356.6 682.5,356.3 697.5,358.8 716.3,361.3 728.8,363.1 736.3,363.8" />
<polyline points="624.6,363.1 647.5,365.0 657.5,366.3 703.8,366.3 716.3,365.0 728.8,363.6" />
<polyline points="624.6,366.3 647.5,369.4 667.5,371.3 685.0,371.3 697.5,369.4 716.3,366.3 728.8,363.6" />
<polyline points="618.8,385.0 633.8,384.4 645.0,388.1 653.1,392.5" />
<polyline points="655.0,393.8 660.0,390.8 667.5,389.2 675.0,392.3 685.0,391.3 696.3,395.6 707.5,392.5 722.5,392.3 735.0,397.5" />
<polyline points="621.3,393.1 647.5,396.9 666.3,399.4 672.5,399.4 691.3,401.3 716.3,401.3 731.3,401.3" />
<polyline points="647.5,406.3 660.0,407.2 675.0,405.6 691.3,408.1 710.0,406.3 725.0,401.9" />
<polyline points="740.6,366.9 740.0,372.5 736.3,378.8 731.3,383.8 724.4,387.5" />
<polyline points="600.0,388.2 602.0,388.8 607.0,393.8 613.8,398.1 630.0,401.3 647.5,406.3 657.5,413.3" />
</g>
<g fill="none" stroke="#3be246" stroke-width="1.1"><path d="M80.5 312.5 H700.5 M80.5 323.5 H700.5 M80.5 413.4 H700.5 M80.5 425.2 H700.5"/></g>
<g fill="none" stroke="#f2f2f2" stroke-width="1.1"><path d="M57 293.4 H677.5 Q679 300 682.500 304 Q689 310.500 700.500 312.500 V323.500 H704 A45 45 0 0 1 704 413.400 H700.500 V425.200 Q689 427 682.500 433.800 Q679 438 677.500 444.400 H57.500"/></g>
<g fill="none" stroke="#42dcdc" stroke-width="1.1"><path d="M57 293.400 H33.300 V444.400 H57.700 Q59 438.500 63 433.800 Q68.500 427.600 80.500 425.200 V413.400 H87.300 A45.300 45.300 0 0 0 87.300 323.500 H80.500 V312.500 Q68 310.500 62 304 Q58.500 300 57 293.400"/></g>
<g fill="none" stroke="#3be246" stroke-width="1.1"><path d="M766 293.400 H796 M766 444.400 H796 M776.500 293.400 V444.400"/></g>
<circle cx="776.500" cy="293.400" r="1.600" fill="#3be246"/><circle cx="776.500" cy="444.400" r="1.600" fill="#3be246"/>
<text transform="translate(769.800,369.500) rotate(-90) scale(0.780,1)" text-anchor="middle" font-family="Liberation Sans,Noto Sans CJK SC,sans-serif" font-size="26" fill="#3be246" shape-rendering="auto">32</text>
<g clip-path="url(#cs)" stroke="#52dc66" stroke-width="1" fill="none"><rect x="790" y="290" width="110" height="160" fill="#031c05" stroke="none"/><path d="M634.8 450 L794.8 290 M639.8 450 L799.8 290 M644.8 450 L804.8 290 M649.8 450 L809.8 290 M654.8 450 L814.8 290 M659.8 450 L819.8 290 M664.8 450 L824.8 290 M669.8 450 L829.8 290 M674.8 450 L834.8 290 M679.8 450 L839.8 290 M684.8 450 L844.8 290 M689.8 450 L849.8 290 M694.8 450 L854.8 290 M699.8 450 L859.8 290 M704.8 450 L864.8 290 M709.8 450 L869.8 290 M714.8 450 L874.8 290 M719.8 450 L879.8 290 M724.8 450 L884.8 290 M729.8 450 L889.8 290 M734.8 450 L894.8 290 M739.8 450 L899.8 290 M744.8 450 L904.8 290 M749.8 450 L909.8 290 M754.8 450 L914.8 290 M759.8 450 L919.8 290 M764.8 450 L924.8 290 M769.8 450 L929.8 290 M774.8 450 L934.8 290 M779.8 450 L939.8 290 M784.8 450 L944.8 290 M789.8 450 L949.8 290 M794.8 450 L954.8 290 M799.8 450 L959.8 290 M804.8 450 L964.8 290 M809.8 450 L969.8 290 M814.8 450 L974.8 290 M819.8 450 L979.8 290 M824.8 450 L984.8 290 M829.8 450 L989.8 290 M834.8 450 L994.8 290 M839.8 450 L999.8 290 M844.8 450 L1004.8 290 M849.8 450 L1009.8 290 M854.8 450 L1014.8 290 M859.8 450 L1019.8 290 M864.8 450 L1024.8 290 M869.8 450 L1029.8 290 M874.8 450 L1034.8 290 M879.8 450 L1039.8 290 M884.8 450 L1044.8 290 M889.8 450 L1049.8 290 M894.8 450 L1054.8 290 M899.8 450 L1059.8 290"/></g>
<path d="M795.4 293.4 H818.7 Q820.2 300 823.7 304 Q830.2 310.5 842.6 312.6 V323.5 Q866 324 879.5 340 Q890 353 890 368.9 Q890 385 879.5 398 Q866 413.5 842.6 414.3 V425.2 Q830.2 427 823.7 433.8 Q820.2 438 818.7 444.4 H795.4 Z" fill="none" stroke="#3ce0a8" stroke-width="1.1"/>
</svg>
<!--CANVAS_END-->
</div>
<!-- vertical scrollbar -->
<div class="abs" style="left:979px;top:104px;width:17px;height:530px;background:linear-gradient(to right,#f3f1ec 0,#fdfdfb 40%,#fefefb 100%)"></div>
<div class="abs sbtn" style="left:980px;top:105px;width:15px;height:15px"><svg width="15" height="15"><path d="M3.500 9 L7.500 5 L11.500 9" fill="none" stroke="#4d6185" stroke-width="2"/></svg></div>
<div class="abs sbtn" style="left:980px;top:617px;width:15px;height:14px"><svg width="15" height="14"><path d="M3.500 5 L7.500 9 L11.500 5" fill="none" stroke="#4d6185" stroke-width="2"/></svg></div>
<div class="abs sbtn" style="left:980px;top:360px;width:15px;height:16px"><svg width="15" height="16"><path d="M4 5.500 H11 M4 7.500 H11 M4 9.500 H11 M4 11.500 H11" stroke="#eef3ff" stroke-width="1"/><path d="M4 6.500 H11 M4 8.500 H11 M4 10.500 H11" stroke="#8ea4e0" stroke-width="0.600"/></svg></div>
<div class="abs" style="left:996px;top:102px;width:1px;height:550px;background:#fff"></div>
<div class="abs" style="left:997px;top:102px;width:1px;height:550px;background:#d5d2c2"></div>
<style>
.sbtn{border-radius:2px;border:1px solid #fff;background:linear-gradient(to right,#c9d8fc 0,#bccdf8 60%,#b3c4f0 100%);box-shadow:0 0 0 0.5px #b4c5f3 inset}
.sbtn svg{position:absolute;left:-1px;top:-1px}
</style>
<!-- tab bar / h scroll -->
<div class="abs" style="left:26px;top:634px;width:971px;height:14px;background:#ece9d8"></div>
<svg class="abs" style="left:26px;top:634px" width="172" height="16" viewBox="26 634 172 16">
 <rect x="28" y="634" width="72" height="14" fill="#f1efe4"/>
 <path d="M27.500 634 V648 H100" fill="none" stroke="#9d9a8a"/>
 <path d="M45.500 634 V647 M63.500 634 V647 M81.500 634 V647 M99.500 634 V647" stroke="#c5c2b2"/>
 <path d="M46.500 634 V647 M64.500 634 V647 M82.500 634 V647" stroke="#fff"/>
 <g fill="#000"><rect x="33" y="636" width="1.500" height="9"/><path d="M41 636 V645 L35.500 640.500 Z"/><path d="M57 636 V645 L51.500 640.500 Z"/><path d="M70 636 V645 L75.500 640.500 Z"/><path d="M88 636 V645 L93.500 640.500 Z"/><rect x="94" y="636" width="1.500" height="9"/></g>
 <path d="M107 634 H143 L139 648 H111.500 Z" fill="#000"/><path d="M104 634 L109 648" stroke="#000" stroke-width="1" fill="none"/>
 <path d="M143 634 L145.500 647.500 H185.500 L189.500 634" fill="#f1efe4" stroke="#000" stroke-width="1"/>
</svg>
<div class="abs" style="left:111px;top:631px;font:bold 12px 'Liberation Sans','Noto Sans CJK SC',sans-serif;color:#fff;letter-spacing:0;white-space:pre">模型</div>
<div class="abs" style="left:150px;top:631px;font:12px 'Liberation Sans','Noto Sans CJK SC',sans-serif;color:#000;white-space:pre">布局1</div>
<!-- h scrollbar -->
<div class="abs" style="left:655px;top:634px;width:324px;height:15px;background:#f4f3ee;background-image:repeating-linear-gradient(90deg,rgba(0,0,0,0.035) 0 1px,transparent 1px 2px)"></div>
<div class="abs" style="left:655px;top:634px;width:6px;height:14px;border:1px solid #5f73a8;border-radius:2px;background:#eef2fb"></div>
<div class="abs sbtn" style="left:663px;top:634px;width:15px;height:14px"><svg width="15" height="14"><path d="M9 3 L5 7 L9 11" fill="none" stroke="#4d6185" stroke-width="2"/></svg></div>
<div class="abs" style="left:26px;top:648px;width:971px;height:2px;background:#fbfaf3"></div>
<div class="abs" style="left:0;top:650px;width:1024px;height:1px;background:#fffffa"></div>
<div class="abs" style="left:0;top:651px;width:1024px;height:4px;background:#efede2"></div>
<div class="abs" style="left:0;top:655px;width:1024px;height:1px;background:#1c1c1c"></div>
<!-- command window -->
<div class="abs" style="left:0;top:656px;width:1024px;height:56px;background:#ece9d8"></div>
<div class="abs" style="left:6px;top:664px;width:3px;height:41px;border-left:1px solid #fff;border-right:1px solid #aca899"></div>
<div class="abs" style="left:10px;top:664px;width:3px;height:41px;border-left:1px solid #fff;border-right:1px solid #aca899"></div>
<div class="abs" style="left:17px;top:661px;width:1007px;height:48px;background:#fff;border-left:1px solid #000;border-top:1px solid #000;border-bottom:1px solid #d5d2c2"></div>
<div class="abs" style="left:18px;top:692px;width:1006px;height:1px;background:#b9b7ad"></div>
<div class="abs cmd" style="left:19px;top:659px"><span class="c">正在重生成模型。</span></div>
<div class="abs cmd" style="left:19px;top:672px">AutoCAD <span class="c">菜单实用程序已加载。</span></div>
<div class="abs cmd" style="left:19px;top:691px"><span class="c" style="margin-right:5px">命令</span>:</div>
<style>
.cmd{font:13px "Liberation Mono","Noto Serif CJK SC",monospace;white-space:pre;letter-spacing:0.2px;color:#000}
.cmd .c{display:inline-block;transform:scaleX(1.17);transform-origin:0 0;letter-spacing:0.65px;font-family:"Noto Sans CJK SC",sans-serif;font-weight:300}
.stb{position:absolute;top:715px;height:18px;font:12px "Liberation Sans","Noto Sans CJK SC",sans-serif;white-space:pre;padding:1px 0 0 1px;letter-spacing:0}
.stb.up{border-left:1px solid #fff;border-top:1px solid #fff;border-right:1px solid #aca899;border-bottom:1px solid #aca899}
.stb.dn{border-left:1px solid #404040;border-top:1px solid #404040;border-right:1px solid #fff;border-bottom:1px solid #fff}
</style>
<!-- status bar -->
<div class="abs" style="left:0;top:712px;width:1024px;height:1px;background:#c5c2b2"></div>
<div class="abs" style="left:0;top:713px;width:1024px;height:1px;background:#fff"></div>
<div class="abs" style="left:5px;top:716px;width:251px;height:17px;border:1px solid #aca899;border-right-color:#fff;border-bottom-color:#fff"></div>
<div class="abs" id="coord" style="left:7px;top:720px;font:12px 'Liberation Mono',monospace;letter-spacing:-1.2px;color:#aca899;white-space:pre">151.26, 944.49, 0.00</div>
<div class="stb up" style="left:259px;width:28px">捕捉</div>
<div class="stb up" style="left:291px;width:28px">栅格</div>
<div class="stb up" style="left:323px;width:28px">正交</div>
<div class="stb dn" style="left:355px;width:29px">极轴</div>
<div class="stb dn" style="left:387px;width:54px">对象捕捉</div>
<div class="stb dn" style="left:443px;width:53px">对象追踪</div>
<div class="stb up" style="left:499px;width:27px">线宽</div>
<div class="stb dn" style="left:530px;width:29px">模型</div>
<!-- taskbar -->
<div class="abs" id="tbar" style="left:0;top:734px;width:1024px;height:34px;background:linear-gradient(to bottom,#3168d5 0,#4993e6 2px,#2a6fe4 4px,#2663de 8px,#2562df 22px,#245ddb 28px,#1f4fc4 34px)"></div>
<div class="abs" style="left:947px;top:737px;width:77px;height:31px;background:linear-gradient(to bottom,#0e6cc8 0,#19b4f2 2px,#18a2ee 5px,#1290e8 10px,#0f8eea 22px,#0d80d8 31px);border-left:1px solid #0a3f9c"></div>
<!-- start button -->
<div class="abs" style="left:0;top:738px;width:97px;height:30px;border-radius:0 14px 14px 0;background:linear-gradient(to bottom,#2f8a2f 0,#5cb45c 3px,#3c9f3c 7px,#379a37 18px,#2f8c2f 26px,#256f25 30px);box-shadow:1px 0 2px rgba(0,0,40,.5)"></div>
<svg class="abs" style="left:10px;top:743px" width="22" height="20" viewBox="0 0 22 20">
 <path d="M2 3 Q5 1 9 3 L8 9 Q5 7 1 9 Z" fill="#e8632a"/><path d="M10.500 3.500 Q14 5.500 18 3.500 L17 9.500 Q13 11.500 9.500 9.500 Z" fill="#7cc83c"/>
 <path d="M0.800 10.500 Q4.500 8.500 8 10.500 L7 16.500 Q3.500 14.500 0 16.500 Z" fill="#4a88e0"/><path d="M9.300 11 Q13 13 16.800 11 L15.800 17 Q12 19 8.300 17 Z" fill="#f0c82a"/>
</svg>
<div class="abs" style="left:34px;top:736px;font:italic 21px 'Liberation Sans','Noto Sans CJK SC',sans-serif;font-weight:300;color:#fff;white-space:pre;letter-spacing:0;text-shadow:1px 1px 1px rgba(0,0,0,.4)">开始</div>
<svg class="abs" style="left:100px;top:734px" width="924" height="34" viewBox="100 734 924 34">
 <defs>
  <linearGradient id="tb" x1="0" y1="0" x2="0" y2="1"><stop offset="0" stop-color="#5a9bf4"/><stop offset="0.150" stop-color="#3f84ee"/><stop offset="1" stop-color="#3577e6"/></linearGradient>
  <linearGradient id="tba" x1="0" y1="0" x2="0" y2="1"><stop offset="0" stop-color="#1a45a8"/><stop offset="0.200" stop-color="#1f52c2"/><stop offset="1" stop-color="#2158cc"/></linearGradient>
 </defs>
 <!-- grippers -->
 <g fill="#1a3f9c"><g id="gp"><rect x="0" y="0" width="2" height="2"/><rect x="3" y="3" width="2" height="2"/><rect x="0" y="6" width="2" height="2"/><rect x="3" y="9" width="2" height="2"/><rect x="0" y="12" width="2" height="2"/><rect x="3" y="15" width="2" height="2"/><rect x="0" y="18" width="2" height="2"/></g></g>
 <use href="#gp" x="105" y="744" fill="#1a3f9c"/><use href="#gp" x="208" y="744" fill="#1a3f9c"/><use href="#gp" x="804" y="744" fill="#1a3f9c"/><use href="#gp" x="860" y="744" fill="#1a3f9c"/>
 <!-- quick launch -->
 <rect x="118.500" y="745.500" width="15" height="15" rx="2" fill="#f0a24a" stroke="#fbe0b8"/><rect x="120.500" y="747.500" width="11" height="11" fill="#fde9c8"/><path d="M123.500 749 L130 753 L123.500 757 Z" fill="#111"/>
 <path d="M142 752 L150 745 L158 751 L151 758 Z" fill="#1f7fd6"/><path d="M141.500 753 Q149 762 158.500 754.500 L157.500 751.500 Q150 758 143 750.500 Z" fill="#f0d020" stroke="#5a4a10" stroke-width="0.800"/><path d="M146 747 L152 745 L156 749" fill="none" stroke="#9fd0f8" stroke-width="1"/>
 <path d="M167.500 752 H177.500 L176 762 H169 Z" fill="#d88a3a" stroke="#7a4a1a" stroke-width="0.800"/><path d="M169 745 L170.500 752 M172.500 744 V752 M176 745 L174.500 752" stroke="#c9b8d8" stroke-width="1.600"/><path d="M169 745 L169.300 747 M172.500 744 V746 M176 745 L175.700 747" stroke="#4a6aba" stroke-width="1.600"/>
 <path d="M193 745 L196 748 L193 751 M197.500 745 L200.500 748 L197.500 751" fill="none" stroke="#cfe0ff" stroke-width="1.400"/>
 <!-- task buttons -->
 <rect x="219.500" y="741.500" width="113" height="24" rx="2.500" fill="url(#tb)" stroke="#2a5fcf"/>
 <rect x="335.500" y="741.500" width="114" height="24" rx="2.500" fill="url(#tb)" stroke="#2a5fcf"/>
 <rect x="452.500" y="741.500" width="114" height="24" rx="2.500" fill="url(#tba)" stroke="#16399a"/>
 <rect x="569.500" y="741.500" width="113" height="24" rx="2.500" fill="url(#tb)" stroke="#2a5fcf"/>
 <rect x="685.500" y="741.500" width="113" height="24" rx="2.500" fill="url(#tb)" stroke="#2a5fcf"/>
 <!-- IE page icon -->
 <path d="M232.500 746.500 H240 L243.500 750 V760.500 H232.500 Z" fill="#f6f6f0" stroke="#9a9a90"/><circle cx="234" cy="753.500" r="4.300" fill="none" stroke="#2a66d8" stroke-width="2"/><path d="M229 755.500 Q234 749 240.500 748.500" fill="none" stroke="#2a66d8" stroke-width="1.300"/>
 <!-- folder -->
 <path d="M344.500 749.500 H350 L351.500 751.500 H358.500 V760.500 H344.500 Z" fill="#f6d860" stroke="#b8922a"/><path d="M344.500 760.500 L346.500 753.500 H360 L358.500 760.500 Z" fill="#fbe88a" stroke="#b8922a"/>
 <!-- autocad a -->
 <rect x="461.500" y="745.500" width="16" height="16" fill="#1d7f9c" stroke="#d8eef2"/><rect x="463.500" y="747.500" width="12" height="12" fill="#2a93ae"/><text x="469.500" y="759" text-anchor="middle" font-family="Liberation Sans,sans-serif" font-weight="bold" font-size="14" fill="#e9f6f8">a</text>
 <!-- photoshop eye -->
 <path d="M578.500 746.500 H587.500 L590.500 749.500 V761.500 H578.500 Z" fill="#e8e6dc" stroke="#8a887a"/><circle cx="585" cy="754" r="5.500" fill="#2a5fcf" stroke="#0a1f5a" stroke-width="1.400"/><circle cx="585" cy="754" r="3" fill="#e8a23a"/><circle cx="586" cy="754" r="1.500" fill="#111"/>
 <!-- paint -->
 <path d="M695.500 754 H704.500 L703 763 H697 Z" fill="#d8853a" stroke="#7a4a1a" stroke-width="0.800"/><path d="M697 746 L698.500 754 M700 745 V754 M703.500 746 L702 754" stroke="#d8c8e0" stroke-width="1.600"/><path d="M697 746 L697.300 748 M700 745 V747 M703.500 746 L703.200 748" stroke="#c83a3a" stroke-width="1.600"/>
 <!-- desktop toolbar chevrons -->
 <path d="M846 745 L849 748 L846 751 M850.500 745 L853.500 748 L850.500 751" fill="none" stroke="#cfe0ff" stroke-width="1.400"/>
 <!-- keyboard -->
 <path d="M876.500 751.500 H889.500 V759.500 H875.500 V751.500 Z" fill="#f4f1e4" stroke="#111"/><path d="M877.500 753.500 H888.500 M877.500 755.500 H888.500" stroke="#111" stroke-dasharray="1 1"/><path d="M879 757.500 H887" stroke="#111"/><path d="M880 751 Q881 747 884 748.500" fill="none" stroke="#e8e4d0" stroke-width="1"/>
 <!-- help ? -->
 <path d="M897.500 746.500 H909.500 V758.500 H905 L903 761.500 V758.500 H897.500 Z" fill="#f8f4d8" stroke="#111"/><text x="903.500" y="757" text-anchor="middle" font-family="Liberation Sans,sans-serif" font-weight="bold" font-size="11" fill="#111">?</text>
 <!-- restore -->
 <rect x="924.500" y="744.500" width="5" height="4" fill="none" stroke="#fff"/><rect x="922.500" y="747.500" width="5" height="4" fill="#2562df" stroke="#fff"/><path d="M923 757 H929 L926 760 Z" fill="#e8f0ff"/>
 <!-- tray expand -->
 <circle cx="948" cy="754" r="9" fill="#2a7fe8" stroke="#a8d0f8" stroke-width="1.200"/><path d="M950.500 749.500 L946 754 L950.500 758.500" fill="none" stroke="#fff" stroke-width="2.200"/>
 <!-- network monitors -->
 <rect x="962.500" y="745.500" width="9" height="7.500" fill="#4a5a8a" stroke="#c8d0e0"/><rect x="957.500" y="750.500" width="9.500" height="8" fill="#3a4a7a" stroke="#c8d0e0"/><path d="M959 761.500 H966" stroke="#c8d0e0" stroke-width="1.500"/>
</svg>
<style>
.tk{position:absolute;top:743px;color:#fff;font:12px "Liberation Mono","Noto Sans CJK SC",monospace;white-space:pre;letter-spacing:-1.2px}
.tk .k{letter-spacing:0}
</style>
<div class="tk" style="left:248px"><span class="k">室内人</span>-<span class="k">室</span>...</div>
<div class="tk" style="left:364px"><span class="k">车</span></div>
<div class="tk" style="left:481px;top:748px">AutoCAD 2...</div>
<div class="tk" style="left:596px;top:748px">Adobe Pho...</div>
<div class="tk" style="left:711px">58 - <span class="k">画图</span></div>
<div class="tk" style="left:814px;color:#9dbdf5"><span class="k">桌面</span></div>
<div class="tk" style="left:980px;font:12px 'Liberation Sans',sans-serif;letter-spacing:0.5px;top:746px">12:14</div>
<!-- status tray icon -->
<svg class="abs" style="left:984px;top:714px" width="40" height="20" viewBox="984 714 40 20">
 <rect x="985.500" y="715.500" width="22" height="17" fill="#f3f1e8" stroke="#e4e1d3"/>
 <path d="M992 717 L1000 720 L996 727 L989 730 Z" fill="#9aa6cc" stroke="#5a6690" stroke-width="0.800"/>
 <path d="M998.500 721 L1004.500 732 H992.500 Z" fill="#f8d820" stroke="#6a5a10" stroke-width="0.900"/><path d="M998.500 724.500 V728.500 M998.500 729.700 V731" stroke="#111" stroke-width="1.300"/>
 <path d="M1014 726 H1021 L1017.500 729.500 Z" fill="#111"/>
</svg>
<!-- communication center balloon -->
<svg class="abs" style="left:830px;top:626px" width="194" height="104" viewBox="830 626 194 104">
 <path d="M845.500 631.500 H1011.500 Q1020.500 631.500 1020.500 640.500 V695.500 Q1020.500 704.500 1011.500 704.500 H979 L996.500 723.500 L961 704.500 H845.500 Q836.500 704.500 836.500 695.500 V640.500 Q836.500 631.500 845.500 631.500 Z" fill="#ffffe1" stroke="#000" stroke-width="1"/>
 <!-- info icon -->
 <path d="M851 652 L850 656 L855 653 Z" fill="#b8c8e8" stroke="#8a9ac8" stroke-width="0.600"/>
 <circle cx="853.800" cy="646.800" r="6.800" fill="#dfe8f8" stroke="#9fb0d8" stroke-width="1"/>
 <circle cx="853.800" cy="646.800" r="5" fill="#eef3fc"/>
 <rect x="852.800" y="642.300" width="2.200" height="2.200" fill="#1a3fb0"/><path d="M852 646 H855 V650.500 H856 M852 650.500 H856" stroke="#1a3fb0" stroke-width="1.600" fill="none"/>
 <!-- close box -->
 <rect x="996.500" y="640.500" width="15" height="14.500" fill="#f4f2dc" stroke="#9a988a"/>
 <path d="M1000.500 644.500 L1007.500 651.500 M1007.500 644.500 L1000.500 651.500" stroke="#000" stroke-width="2"/>
</svg>
<div class="abs" style="left:872px;top:637px;font:bold 12px 'Liberation Sans','Noto Sans CJK SC',sans-serif;letter-spacing:0.8px;white-space:pre;color:#000">通信中心</div>
<div class="abs" style="left:852px;top:659px;font:12px 'Liberation Sans','Noto Sans CJK SC',sans-serif;white-space:pre;color:#000">使软件保持最新的简单方法。</div>
<div class="abs" style="left:852px;top:677px;font:12px 'Liberation Sans','Noto Sans CJK SC',sans-serif;white-space:pre;color:#0000ff;text-decoration:underline">单击此处。</div>
</body>
</html>
